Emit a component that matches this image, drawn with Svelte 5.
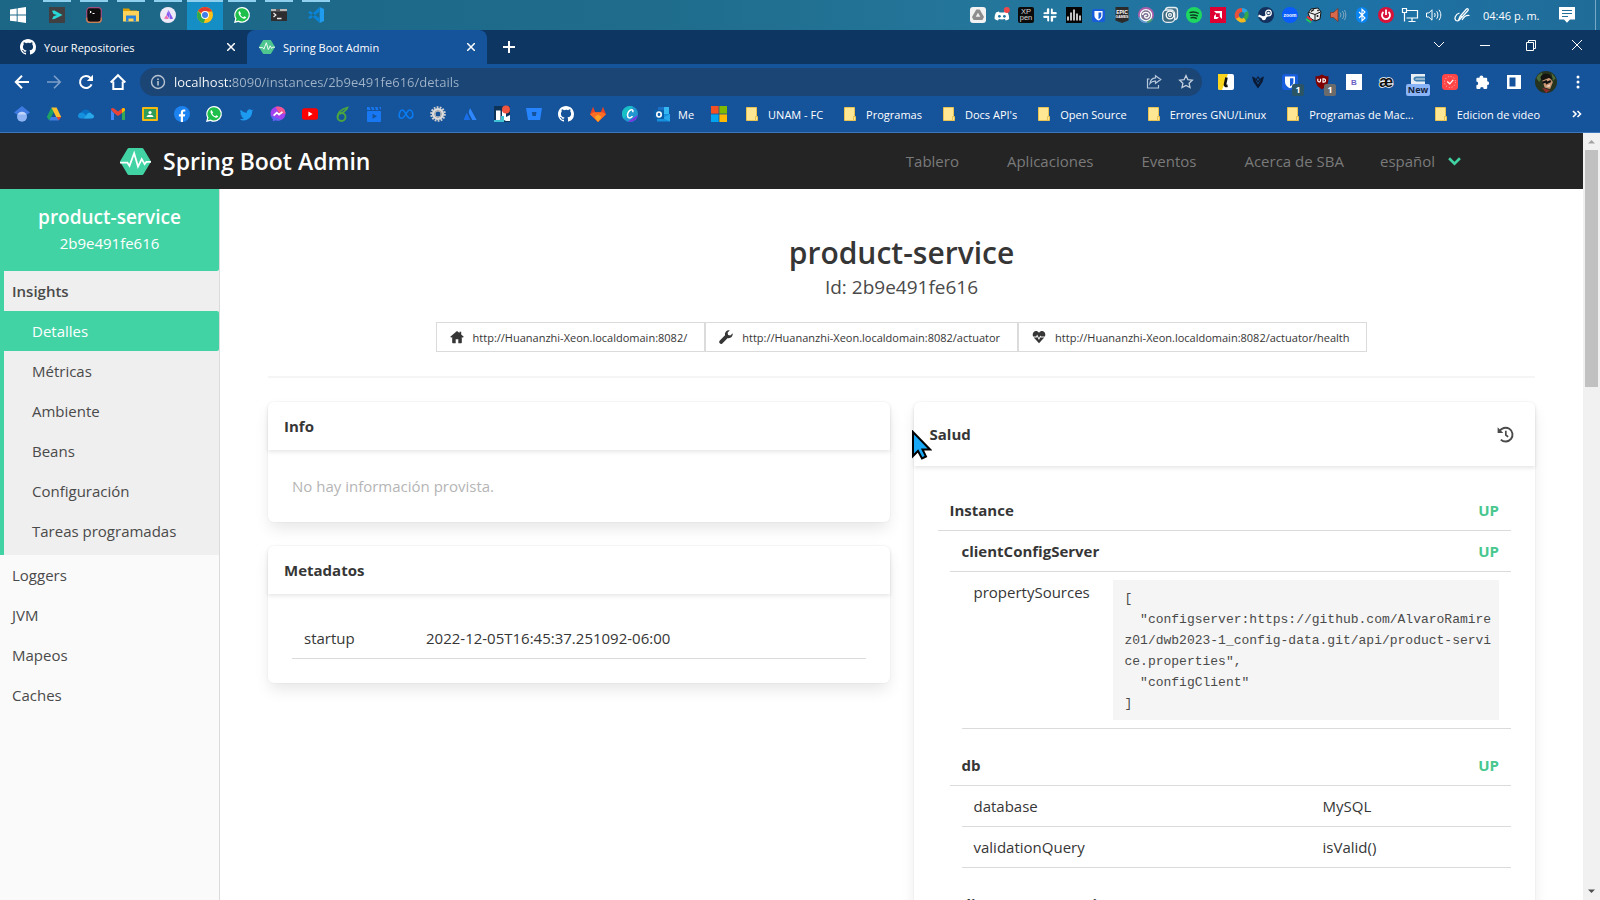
<script>
  const art = {
    windows: '<path fill="#fff" d="M0 2.4 6.7 1.4v6.2H0zM7.6 1.3 16 0v7.6H7.6zM0 8.4h6.7v6.2L0 13.7zM7.6 8.4H16V16l-8.4-1.2z"/>',
    arrowApp: '<rect width="16" height="16" fill="#404042"/><path fill="#28d9d5" d="M3 3.800 5.500 3.600 13.500 8 5.500 12 3 12.200 4.500 9.200 8 8 4.500 7z"/>',
    jet: '<rect x=".7" y=".7" width="14.6" height="14.6" rx="3" fill="#0d0d0d" stroke="#a04f80" stroke-width="1.200"/><path d="M.7 10.500v1.800c0 2 1 3 3 3h8.600c2 0 3-1 3-3v-1.800" fill="none" stroke="#c98352" stroke-width="1.200"/><path d="m3.800 4 1.500 1-1.500 1M6.500 6.500h2" stroke="#fff" fill="none"/>',
    explorer: '<path fill="#e0a100" d="M0 1.500h6l1.500 2H14V8H0z"/><path fill="#ffd35a" d="M0 4h16v10.5H0z"/><path fill="#2a83d8" d="M3 8.500h10v6h-2.500v-3h-5v3H3z"/>',
    prism: '<circle cx="8" cy="8" r="8" fill="#efeaf7"/><path fill="#8558f0" d="m8.5 3 4.5 8.5c-1 .5-2 .6-3 .4z"/><path fill="#8558f0" d="M8.500 3 6.500 7.500l3 4.500z"/><path fill="#f06bb0" d="M4 11.6 6.500 8l2 3.800c-1.500.3-3 .3-4.500-.2z"/>',
    chrome: '<circle cx="8" cy="8" r="8" fill="#fbc116"/><path fill="#e33b2e" d="M8 8 1.1 4A8 8 0 0 1 14.9 4L15 4.4H8z"/><path fill="#2da94f" d="M1.1 4 6 9.8l2.3 1.6L6.8 15.9A8 8 0 0 1 1.1 4z"/><circle cx="8" cy="8" r="3.9" fill="#fff"/><circle cx="8" cy="8" r="3" fill="#3f7ee8"/>',
    whatsapp: '<path fill="#fff" d="M8.1 0A7.9 7.9 0 0 0 1.2 11.7L0 16l4.4-1.1A7.9 7.9 0 1 0 8.1 0z"/><path fill="#1fbf4b" d="M8.1 1.3a6.6 6.6 0 0 0-5.6 10.2l-.7 2.7 2.8-.7A6.6 6.6 0 1 0 8.1 1.3z"/><path fill="#fff" d="M5.5 4c-.9.5-1.2 1.5-.9 2.5.8 2.6 2.4 4.3 5 5.2 1.300.3 2.400-.3 2.600-1.400l-1.900-1-.9 1c-1.500-.6-2.500-1.600-3.100-2.900l.8-.9z"/>',
    terminal: '<path fill="#2e2e30" d="M0 2h16v12H0z"/><path fill="#b8b8b8" d="M0 2h16v2.200H0z"/><path fill="#5a5a5c" d="M5 2h4v2.200H5z"/><path d="m2.500 6 2.300 2-2.300 2M6 11.500h4.500" stroke="#e8e8e8" stroke-width="1.300" fill="none"/>',
    vscode: '<path fill="#1f9cf0" d="m11.600 0 4.400 2v12l-4.400 2z"/><path fill="#0a84d8" d="M11.600 0v4.400L2.200 12 0 10.700zM11.600 16v-4.400L2.200 4 0 5.300z"/>',
    github: '<path fill="#fff" d="M8 0C3.580 0 0 3.580 0 8c0 3.540 2.290 6.530 5.470 7.590.4.070.55-.17.55-.38v-1.490c-2.010.37-2.530-.49-2.690-.94-.09-.23-.48-.94-.82-1.130-.28-.15-.68-.52-.01-.53.63-.01 1.080.58 1.230.82.72 1.210 1.870.87 2.330.66.07-.52.28-.87.51-1.070-1.780-.2-3.640-.89-3.640-3.950 0-.87.31-1.590.82-2.150-.08-.2-.36-1.020.08-2.120 0 0 .67-.21 2.200.82A7.650 7.650 0 0 1 8 3.860c.68 0 1.360.09 2 .27 1.530-1.040 2.200-.82 2.200-.82.44 1.100.16 1.920.08 2.120.51.56.82 1.270.82 2.150 0 3.070-1.870 3.750-3.650 3.950.29.25.54.73.54 1.480v2.200c0 .21.15.46.55.38A8.010 8.010 0 0 0 16 8c0-4.420-3.580-8-8-8z"/>',
    sba: '<path fill="currentColor" d="M4.600 1h6.800c.3 0 .6.200.7.400l3.700 6.200c.2.300.2.500 0 .8l-3.700 6.200c-.1.200-.4.400-.7.400H4.600c-.3 0-.6-.2-.7-.4L.2 8.400C0 8.100 0 7.900.2 7.600l3.700-6.200c.1-.2.400-.4.700-.4z"/><path d="M0 8.600h3.800l1.100 1.600L7.300 3.700l2 6.900 1.900-3.800 1.500 2.600.9-1.200H16" fill="none" stroke="#fff" stroke-width=".9"/>',
    back: '<path d="M15 8H2M8 1.800 1.800 8 8 14.200" fill="none" stroke="#fff" stroke-width="2"/>',
    fwd: '<path d="M1 8h13M8 1.800 14.200 8 8 14.200" fill="none" stroke="#7ea0c9" stroke-width="1.600"/>',
    reload: '<path d="M13.600 10.300A6 6 0 1 1 12.500 4" fill="none" stroke="#fff" stroke-width="2"/><path fill="#fff" d="M15 .800V7H8.800z"/>',
    home: '<path d="M3.300 7.500V15h9.400V7.500M.700 8.500 8 1.200l7.300 7.300" fill="none" stroke="#fff" stroke-width="2"/>',
    info: '<circle cx="8" cy="8" r="6.500" fill="none" stroke="#b8c4d2" stroke-width="1.400"/><path fill="#b8c4d2" d="M7.200 7h1.600v4.500H7.200zM7.200 4.400h1.600V6H7.200z"/>',
    share: '<path d="M3.500 5H1.500v9h11v-3" fill="none" stroke="#b8c8dc" stroke-width="1.200"/><path d="M9.500 1.700 14.800 5.500 9.500 9.300V7.100C7 6.900 5.200 7.800 4 9.500c.3-3.500 2.200-5.300 5.500-5.600z" fill="none" stroke="#b8c8dc" stroke-width="1.200"/>',
    star: '<path d="m8 1.600 1.900 4.100 4.400.5-3.200 3 .9 4.400L8 11.400l-4 2.200.9-4.400-3.200-3 4.400-.5z" fill="none" stroke="#c4d0de" stroke-width="1.300"/>',
    scholar: '<path fill="#3f7ae0" d="M8 0 0 6.500 3.500 9h9L16 6.500z"/><circle cx="8" cy="10.800" r="5" fill="#8fb4f4"/><path fill="#c3d6fa" d="M3.600 8.500a5 5 0 0 1 8.800 0z"/>',
    drive: '<path fill="#1ea362" d="M5.400 1.500 .8 11l2.400 3.500L8 5.800z"/><path fill="#fbc02d" d="M5.400 1.500h5.200L15.200 11h-5z"/><path fill="#3f7de8" d="M3.200 14.500h9.600L13 12.500 10.800 11H5z"/><path fill="#e04435" d="M10.500 11h4.700l-2.400 3.500z"/>',
    onedrive: '<path fill="#0a6fc2" d="M3.500 6.500C4.500 3.200 9.600 2.200 11.700 6L14 7 8 10z"/><path fill="#1590df" d="M0 10c0-3 3-4.300 5.300-3L12 12.500H3C1.200 12.500 0 11.500 0 10z"/><path fill="#28a8ea" d="M6 12.500 9.500 7.500c1.500-1.400 3.800-.9 4.500.8 1.300.3 2 1.200 2 2.200 0 1.200-1 2-2.200 2z"/>',
    gmail: '<path fill="#4285f4" d="M1 4v10h3V7z"/><path fill="#34a853" d="M12 7v7h3V4z"/><path fill="#ea4335" d="M1 3.500c0-1.700 1.700-2 3-1l4 3 4-3c1.300-1 3-.7 3 1L12 7 8 10 4 7z"/><path fill="#fbbc04" d="m12 2.500v4.500l3-2.500v-1c0-1.700-1.700-2-3-1z"/>',
    classroom: '<rect y="1" width="16" height="14" rx="1" fill="#f5b912"/><path fill="#2f9e58" d="M2 3h12v10H2z"/><circle cx="8" cy="6.500" r="1.600" fill="#fff"/><path fill="#fff" d="M4.500 11c.5-3 6.500-3 7 0z"/>',
    facebook: '<circle cx="8" cy="8" r="8" fill="#1b82f0"/><path fill="#fff" d="M6.800 16v-5.500H4.900V8.200h1.900V6.600c0-2.200 1.200-3.200 3-3.200.7 0 1.300.1 1.500.2v2h-1c-1 0-1.300.5-1.300 1.200v1.400h2.200l-.4 2.300H9V16z"/>',
    twitter: '<path fill="#1d9bf0" d="M14.300 5c.5-.4.900-.9 1.100-1.400-.5.300-1.100.5-1.700.6a2.900 2.900 0 0 0-4.900 2.500C6.300 6.600 4.200 5.500 2.700 3.800c-.8 1.300-.4 2.900.9 3.800L2.400 7.300c0 1.300.9 2.400 2.200 2.800-.4.100-.9.100-1.300 0 .4 1.100 1.400 1.900 2.700 2A6 6 0 0 1 1.500 13.200c5 3 12.500.4 12.800-8.200z"/>',
    messenger: '<path fill="#a042f0" d="M8 .5C3.700.5.500 3.500.5 7.600c0 2.200.9 4 2.400 5.300v2.600l2.200-1.200c.9.3 1.900.4 2.900.4 4.300 0 7.500-3.100 7.500-7.100S12.300.5 8 .5z"/><path fill="#f2568e" d="M8 .5c4.300 0 7.500 3 7.500 7.100l-6 .4-4-7.200z"/><path fill="#2f7bf5" d="M.8 9.500c.5 1.500 1.100 2.500 2.100 3.400v2.600l2.200-1.200c.9.300 1.900.4 2.900.4 1.300 0 2.600-.4 3.600-.9z" opacity=".6"/><path d="m3.600 9.700 3.200-3 2.300 1.900 3.300-2.700" fill="none" stroke="#fff" stroke-width="1.700"/>',
    youtube: '<rect y="2.300" width="16" height="11.400" rx="2.500" fill="#f00"/><path fill="#fff" d="M6.400 5.600v4.800L10.600 8z"/>',
    leaf: '<circle cx="7.500" cy="11" r="4" fill="none" stroke="#4aa540" stroke-width="1.900"/><path d="M3.700 11C3.500 6.500 6.500 3.500 13.500 1.500 12.800 4.500 9.500 6 6 8" fill="none" stroke="#4aa540" stroke-width="1.700"/>',
    studio: '<rect x="1" y="5" width="14" height="11" rx="1" fill="#1877f2"/><path fill="#1877f2" d="M1 1h2.600l1 3H1zM5 1h2.400l1 3H6zM9 1h2.400l1 3H10zM13 1h2v3z"/><path fill="#15539c" d="M6.500 7.800v5L11 10.300z"/>',
    meta: '<path d="M1.200 10.300C1 7 2.400 4 4.400 4 7 4 9 12.200 11.800 12.200c2 0 3-1.500 3-3.200C14.800 6.500 13.600 4 11.600 4 8.800 4 7 12.200 3.700 12.200c-1.500 0-2.400-.7-2.500-1.900z" fill="none" stroke="#0a7cf2" stroke-width="1.600"/>',
    gear: '<circle cx="8" cy="8" r="6.800" fill="none" stroke="#d0d0d0" stroke-width="2" stroke-dasharray="1.800 1.250"/><circle cx="8" cy="8" r="4.300" fill="none" stroke="#dcdcdc" stroke-width="3.600"/><circle cx="8" cy="8" r="3.400" fill="none" stroke="#9a9a9a" stroke-width=".9"/>',
    atlas: '<path fill="#1a6fe8" d="M4.300 7.500c.3-.4.7-.3.900 0l3 6.600H1.600z"/><path fill="#2f88ff" d="M8.200 2.200 14.600 14.100h-4.300L7 7.500c-.4-1.800 0-3.600 1.200-5.300z"/>',
    photo: '<rect width="16" height="16" fill="#0d3358"/><path fill="#fff" d="M2 4.500h4.500V14H2zM8 5h4v6l4-2v6h-4l-4-2z"/><path fill="#3fc1d4" d="M0 14h7v2H0zM7 10h3v6H7z"/><circle cx="12" cy="3.500" r="4" fill="#f0553f"/>',
    bitbucket: '<path fill="#2684ff" d="M0 2h16l-1.900 12H2z"/><path fill="#15539c" d="M5.800 6h4.700l-.7 4H6.500z"/>',
    gitlab: '<path fill="#e24329" d="m3 .8 2.300 5.500h5.400L13 .800l3 7.500L8 16 0 8.300z"/><path fill="#fc6d26" d="M0 8.300 3.500 6.300h9L16 8.300 8 16z"/><path fill="#fca326" d="M4.500 11 8 8.500l3.500 2.500L8 16z"/>',
    canva: '<circle cx="8" cy="8" r="8" fill="#2196cf"/><path fill="#18bfc6" d="M0 8a8 8 0 0 1 11-7.400L2 13.300A8 8 0 0 1 0 8z"/><path fill="#7a35e0" d="M15.900 9A8 8 0 0 1 6 15.700z"/><path d="M10.700 6.200c.5-1.200.2-2.500-1-2.500-2.200 0-4.200 3-4.200 5.600 0 3 3 3.600 5 .8" fill="none" stroke="#fff" stroke-width="1.500"/>',
    outlook: '<path fill="#35b8f1" d="M4 1h11v8H4z"/><path fill="#1a6fc4" d="M4 1h6v5H4z"/><path fill="#1490df" d="M3 8h13v7.500H3z"/><path fill="#28a8ea" d="M16 8v7.500l-7-3.500z"/><rect y="4" width="10" height="9" fill="#0b5ea8"/><ellipse cx="5" cy="8.500" rx="2.200" ry="2.500" fill="none" stroke="#fff" stroke-width="1.600"/>',
    ms: '<path fill="#f25022" d="M0 0h7.600v7.600H0z"/><path fill="#7fba00" d="M8.400 0H16v7.600H8.400z"/><path fill="#00a4ef" d="M0 8.400h7.600V16H0z"/><path fill="#ffb900" d="M8.400 8.400H16V16H8.400z"/>',
    folder: '<path fill="#ffe793" stroke="#e8c353" d="M2.500 1.500h10v13h-10z"/><path fill="#ffe793" stroke="#e8c353" d="M11.500 10.500h2v4h-2z"/>',
    extL: '<rect width="16" height="16" rx="2" fill="#fff"/><path fill="#fbd51b" d="M0 0h10L4 16H2a2 2 0 0 1-2-2z"/><path d="M8.500 3.500 7 10.500c-.2 1.200.6 1.600 2.600 1.200" fill="none" stroke="#111" stroke-width="2.600"/>',
    extV: '<path fill="#0b1a33" d="M2 2.500 5.500 4l.5 3 2 3.500L10 7l.5-3L14 2.500 12.500 8 8 14.500 3.500 8z"/><path d="M6.300 5.500 8 3l1.700 2.500L8 8z" fill="none" stroke="#0b1a33" stroke-width="1.100"/>',
    bit: '<rect width="16" height="16" rx="2.500" fill="#175ddc"/><path fill="#fff" d="M3 2.500h10V8c0 3-2.300 5-5 6.200C5.300 13 3 11 3 8z"/><path fill="#175ddc" d="M8 4.200h3.400V8c0 2-1.400 3.400-3.400 4.500z"/>',
    ublock: '<path fill="#800000" d="M8 .5c2 1.300 4 1.800 6.500 1.800 0 6-.5 10-6.500 13-6-3-6.500-7-6.500-13C4 2.300 6 1.800 8 .5z"/><path d="M3.800 4.800v2c0 1.500 2.700 1.500 2.700 0v-2M9 4.800v3.400h.8c2.300 0 2.300-3.400 0-3.400z" fill="none" stroke="#fff" stroke-width="1.200"/>',
    extB: '<rect width="16" height="16" fill="#fff"/><text x="8" y="11" text-anchor="middle" font-family="Liberation Sans" font-weight="700" font-size="8" fill="#6b5fc7">B</text>',
    ae: '<text x="8" y="12.500" text-anchor="middle" font-family="Liberation Sans" font-weight="700" font-size="16" fill="#111" stroke="#fff" stroke-width="1.500" paint-order="stroke">æ</text>',
    extS: '<path fill="#e8eef4" d="M1 0h14v16H1z"/><path d="M15 3.500H6c-2.500.5-2 2.500 0 3h9" fill="none" stroke="#3d7fb0" stroke-width="1.800"/>',
    clock: '<rect width="16" height="16" rx="3.500" fill="#ff4545"/><circle cx="8" cy="8" r="5.500" fill="none" stroke="#ffc1c1" stroke-dasharray="1 1.880"/><path d="m5.200 7.500 2.600 2.300 3.400-4" fill="none" stroke="#fff" stroke-width="1.200"/>',
    puzzle: '<path fill="#fff" d="M5.500 3.300a1.900 1.900 0 0 1 3.800 0v.5h3c.5 0 .9.400.9.900v2.600a1.900 1.900 0 0 1 0 3.800v2.900c0 .5-.4.900-.9.900H9.700a1.800 1.800 0 0 0-3.600 0H3.300c-.5 0-.9-.4-.9-.9v-2.800a1.800 1.800 0 0 0 0-3.600V4.700c0-.5.400-.9.900-.9h2.200z"/>',
    panel: '<path fill="#fff" d="M1 1h14v14H1z"/><path fill="#15539c" d="M3.500 3.500h6v9h-6z"/>',
    dots: '<circle cx="8" cy="3" r="1.500" fill="#fff"/><circle cx="8" cy="8" r="1.500" fill="#fff"/><circle cx="8" cy="13" r="1.500" fill="#fff"/>',
    avatar: '<circle cx="8" cy="8" r="8" fill="#26331f"/><path fill="#4b6b3a" d="M1 5a8 8 0 0 1 4-4l1 3-3 4zM12 1.200l3 4-2 2z"/><path fill="#c99573" d="m5 6 5-2 3 4-2 5-4-1z"/><path fill="#15130f" d="M4 5c0-3 5-4 7-2l2 3-3-1-5 2z"/><path d="m5.500 8.500 2.500-1 .5 1.200 3-1.500" stroke="#111" stroke-width="1.600" fill="none"/><path fill="#f5e6da" d="m8 11 3-1.200-.5 1.600z"/><path fill="#8b2b2b" d="M5 12l6 2-3 2z"/>',
    tDrive: '<rect width="16" height="16" rx="3" fill="#f2f2f2"/><path d="M6.300 2.500h3.400l4.300 7.500-1.600 3H3.600L2 10z" fill="#8d8d8d"/><path d="M8 5.800 10.300 9.800H5.700z" fill="#f2f2f2"/>',
    discord: '<path fill="#fff" d="M5 4.500c-1.300.2-2.300.5-3 1C1 7.500.500 9.500.600 12c1.200.9 2.200 1.400 3.400 1.500l.9-1.400c2 .5 4 .5 5.900 0l.9 1.400c1.200-.1 2.200-.6 3.400-1.500.1-2.500-.4-4.500-1.500-6.500-.7-.5-1.700-.8-3-1l-.5 1H5.500z"/><circle cx="5.400" cy="9.300" r="1.400" fill="#2173a0"/><circle cx="10.400" cy="9.300" r="1.400" fill="#2173a0"/><circle cx="12.800" cy="3" r="3" fill="#f04848"/>',
    xppen: '<rect width="16" height="16" rx="2" fill="#0b0b0b"/><g font-family="Liberation Sans" font-size="7.500" fill="#d8d8d8" text-anchor="middle"><text x="8" y="7">XP</text><text x="8" y="13">pen</text></g>',
    slack: '<g stroke="#fff" stroke-width="2.600" stroke-linecap="round"><path d="M6.200 2.500v3.500M2.500 9.800h3.500M9.800 10v3.500M10 6.200h3.500"/><path d="M9.800 2.500v3.300M2.500 6.200h3.300M6.200 10.200v3.300M10.200 9.800h3.300" stroke-width="2"/></g><path d="M8 1v14M1 8h14" stroke="#23749e"/>',
    bars: '<rect width="16" height="16" fill="#050505"/><path d="M2 9.500v4M5 5.500v8M8 2.500v11M11 6.500v7M14 8.500v5" stroke="#fff" stroke-width="1.500"/>',
    epic: '<path fill="#2b2b2b" d="M1.500 0h13v13.500L8 16l-6.500-2.500z"/><g font-family="Liberation Sans" font-weight="700" fill="#fff" text-anchor="middle"><text x="8" y="7" font-size="5">EPIC</text><text x="8" y="11" font-size="3.500">GAMES</text></g>',
    ubi: '<circle cx="8" cy="8" r="8" fill="#a95fa8"/><path fill="#5f9ed0" d="M.2 10A8 8 0 0 0 10 15.700l2-7z"/><path fill="#4aa070" d="M15 12a8 8 0 0 1-6 4l1-6z"/><circle cx="8" cy="8.200" r="5.600" fill="#7a6f90" stroke="#fff" stroke-width="1.300"/><path d="M4.500 8c.5-3.500 6-3.500 6.800 0 .3 2.700-3.500 4.300-4.600 1.800-.3-1.300 1.300-2 1.900-1" fill="none" stroke="#fff" stroke-width="1.400"/>',
    spiral: '<rect x="3.500" y=".500" width="12" height="12" rx="3" fill="#4a7488" stroke="#e3edf2" stroke-width="1.300"/><rect x=".7" y="3" width="12" height="12.300" rx="4" fill="#3f6b80" stroke="#e3edf2" stroke-width="1.300"/><circle cx="8" cy="8" r="3.800" fill="none" stroke="#fff" stroke-width="1.300"/><circle cx="8" cy="8" r="1.400" fill="none" stroke="#fff" stroke-width="1.100"/>',
    spotify: '<circle cx="8" cy="8" r="8" fill="#1ed760"/><path d="M3.500 5.700c3-1 6.500-.7 9.200.8M4 8.400c2.700-.8 5.300-.5 7.800.8M4.500 10.900c2.200-.6 4.400-.4 6.300.7" fill="none" stroke="#0c3b1e" stroke-width="1.400"/>',
    amd: '<rect width="16" height="16" fill="#dd0031"/><path fill="#fff" d="M4 4h8v8L9.800 9.800V6.200H6.200zM5.900 7v3.100H9l-1.900 1.900H4V8.900z"/>',
    ring: '<path d="M8 3A5 5 0 0 1 12.500 6.500" fill="none" stroke="#2ba4e8" stroke-width="4"/><path d="M12 5c1.500 3 .5 6-2.500 7.500" fill="none" stroke="#35a84c" stroke-width="4"/><path d="M11 12.500c-3 2-7 .5-8-3" fill="none" stroke="#f5b920" stroke-width="4"/><path d="M3.500 11C1.500 7 3.500 3.500 8 2.700" fill="none" stroke="#e9503b" stroke-width="4"/>',
    steam: '<circle cx="8" cy="8" r="8" fill="#14305c"/><circle cx="10.500" cy="6" r="2.800" fill="none" stroke="#fff" stroke-width="1.300"/><circle cx="10.500" cy="6" r="1.300" fill="#fff"/><path d="M.5 8.500 6 11l3-2.500" fill="none" stroke="#fff" stroke-width="2.300"/><circle cx="5.800" cy="11.300" r="2" fill="#fff"/>',
    zoomApp: '<circle cx="8" cy="8" r="8" fill="#0b5cff"/><text x="8" y="9.800" text-anchor="middle" font-family="Liberation Sans" font-weight="700" font-size="5" fill="#fff">zoom</text>',
    dice: '<path fill="#eee" stroke="#111" d="m5 2 7-1 3 4-1 7-5 2-5-3-2-5z"/><path d="M3 5.500 9 7.500l5.500-2.500M9 7.500v6" stroke="#111" fill="none"/><path d="M5 4.500l3-2M11.500 3l1 1" stroke="#111" stroke-width="1.500"/><path d="M1 9.500l5 4" stroke="#e33" stroke-width="1.800"/><path d="M0 12l5 3.500" stroke="#2c5" stroke-width="1.600"/><circle cx="11.500" cy="9" r="1" fill="#111"/>',
    sound: '<path fill="#d8694a" stroke="#7a2f1c" stroke-width=".7" d="M.5 5.500h3L8 1.500v13L3.500 10.500h-3z"/><path d="M10 5.500c1.200 1.500 1.200 3.500 0 5M12.300 4c2 2.500 2 5.500 0 8M14.500 3c1.800 3 1.800 7 0 10" fill="none" stroke="#9bb8c8" stroke-width=".8"/>',
    bt: '<rect x="2" width="12" height="16" rx="6" fill="#0a84f0"/><path d="m5 5 6 6-3 2.700V2.300L11 5l-6 6" fill="none" stroke="#fff" stroke-width="1.100"/>',
    power: '<circle cx="8" cy="8" r="8" fill="#d9123a"/><path d="M5.500 5a4 4 0 1 0 5 0M8 2.500V8" fill="none" stroke="#fff" stroke-width="1.800"/>',
    net: '<path d="M4.500 3.500h11v7.500h-11M.5 1.500h4v4h-4zM2.500 5.500v9M10 11v3M6.500 14.500h7" fill="none" stroke="#fff" stroke-width="1.200"/>',
    vol: '<path fill="none" stroke="#fff" d="M.5 6h2.300L6 2.800v10.400L2.800 10H.5z"/><path d="M8.500 6c.8 1.200.8 2.800 0 4M10.700 4.300c1.600 2.200 1.600 5.200 0 7.400M13 2.800c2.400 3.200 2.400 7.200 0 10.400" fill="none" stroke="#fff"/>',
    pen: '<path d="M6 9.500 12.500 2c1-1 2.500.5 1.500 1.500L7.500 10.700 5 12zM5.500 6C1 7.500 0 12 2 13.500c2.500 1.500 5-2 6-4.500M8 13c1.500-2.500 4-5.500 7.500-4.500" fill="none" stroke="#fff" stroke-width="1.200"/>',
    note: '<path fill="#fff" d="M0 0h16v12.500h-5L8 15.700 5 12.500H0z"/><path d="M3 3.500h10M3 6.500h10M3 9.500h6" stroke="#22719b" stroke-width="1.100"/>',
    hHome: '<path fill="#363636" d="M8 1 .3 7.800l1 1.100L2.500 8v6.200c0 .5.300.8.800.8h3.200v-4.500h3V15h3.200c.5 0 .8-.3.800-.8V8l1.200.9 1-1.100L12.800 5V2h-2v1.400z"/>',
    wrench: '<path fill="#363636" d="M15.600 3.700 13 6.200l-2.600-.6L9.800 3l2.500-2.600A4.500 4.500 0 0 0 6.900 6L.7 12.200a2.200 2.200 0 0 0 3.100 3.100L10 9.100a4.500 4.500 0 0 0 5.600-5.400z"/>',
    heart: '<path fill="#363636" d="M8 3.200C6.500.800 3.500.800 2 2.200.600 3.600.500 5.600 1.200 7.400h3.600l1-2.200 2.200 4 1.500-2.900.8 1.100h4.500c.7-1.800.6-3.800-.8-5.200-1.500-1.400-4.500-1.400-6 1zM2 8.600 8 15l6-6.400H9.800l-.3-.4L8 11.300 5.900 7.500l-.4 1.100z"/>',
    history: '<path d="M2.300 5.200A6.500 6.500 0 1 1 3.600 12.800" fill="none" stroke="#4a4a4a" stroke-width="1.800"/><path fill="#4a4a4a" d="M.6 1.200v5.300h5.300z"/><path d="M8.300 4.500v4l2.200 1.800" fill="none" stroke="#4a4a4a" stroke-width="1.600"/>'
  };

  const apps = [
    ['arrowApp', 'Terminal remota'], ['jet', 'Toolbox'], ['explorer', 'Explorador'], ['prism', 'Prisma'],
    ['chrome', 'Chrome'], ['whatsapp', 'WhatsApp'], ['terminal', 'Terminal'], ['vscode', 'Visual Studio Code']
  ];
  const tray = ['tDrive', 'discord', 'xppen', 'slack', 'bars', 'bit', 'epic', 'ubi', 'spiral', 'spotify', 'amd', 'ring', 'steam', 'zoomApp', 'dice', 'sound', 'bt', 'power', 'net', 'vol'];
  const marks = ['scholar', 'drive', 'onedrive', 'gmail', 'classroom', 'facebook', 'whatsapp', 'twitter', 'messenger', 'youtube', 'leaf', 'studio', 'meta', 'gear', 'atlas', 'photo', 'bitbucket', 'github', 'gitlab', 'canva'];
  const folders = ['UNAM - FC', 'Programas', "Docs API's", 'Open Source', 'Errores GNU/Linux', 'Programas de Mac...', 'Edicion de video'];
  const extensions = [
    { icon: 'extL' }, { icon: 'extV' }, { icon: 'bit', badge: '1', tone: 'teal' }, { icon: 'ublock', badge: '1', tone: 'gray' },
    { icon: 'extB' }, { icon: 'ae' }, { icon: 'extS', badge: 'New', tone: 'new' }, { icon: 'clock' }, { icon: 'puzzle' }, { icon: 'panel' }
  ];
  const insights = ['Detalles', 'Métricas', 'Ambiente', 'Beans', 'Configuración', 'Tareas programadas'];
  const sections = ['Loggers', 'JVM', 'Mapeos', 'Caches'];
  const base = 'http://Huananzhi-Xeon.localdomain:8082/';
  const endpoints = [['hHome', base], ['wrench', base + 'actuator'], ['heart', base + 'actuator/health']];
  const sources = `[
  "configserver:https://github.com/AlvaroRamirez01/dwb2023-1_config-data.git/api/product-service.properties",
  "configClient"
]`;
  let url = $state('localhost:8090/instances/2b9e491fe616/details');
</script>

{#snippet icon(name, cls = '')}
  <svg class="icon {cls}" viewBox="0 0 16 16" aria-hidden="true">{@html art[name]}</svg>
{/snippet}

<div class="screen">
  <div class="taskbar">
    <button class="start" aria-label="Inicio">{@render icon('windows')}</button>
    {#each apps as [name, label]}
      <button class="app" class:current={name === 'chrome'} aria-label={label}>{@render icon(name)}</button>
    {/each}
    <div class="tray">
      {#each tray as name}
        <button class="cell" aria-label={name}>{@render icon(name, name === 'bit' ? 'small' : '')}</button>
      {/each}
      <button class="cell pen" aria-label="Lápiz">{@render icon('pen')}</button>
      <time>04:46 p. m.</time>
      <button class="cell note" aria-label="Notificaciones">{@render icon('note')}</button>
    </div>
  </div>

  <div class="tabs">
    <div class="tab">
      {@render icon('github')}<span>Your Repositories</span>
      <button class="close" aria-label="Cerrar Your Repositories"><svg viewBox="0 0 8 8"><path d="m0 0 8 8M8 0 0 8" /></svg></button>
    </div>
    <div class="tab active">
      {@render icon('sba', 'mint')}<span>Spring Boot Admin</span>
      <button class="close" aria-label="Cerrar Spring Boot Admin"><svg viewBox="0 0 8 8"><path d="m0 0 8 8M8 0 0 8" /></svg></button>
    </div>
    <button class="plus" aria-label="Nueva pestaña"><svg viewBox="0 0 12 12"><path d="M6 0v12M0 6h12" /></svg></button>
    <div class="controls">
      <button aria-label="Buscar pestañas"><svg viewBox="0 0 12 12"><path d="m1 3 5 5 5-5" /></svg></button>
      <button aria-label="Minimizar"><svg viewBox="0 0 12 12"><path d="M1 6.500h10" /></svg></button>
      <button aria-label="Restaurar"><svg viewBox="0 0 12 12"><path d="M1.500 3.500h7v8h-7zM3.500 3.500v-2h7v8h-2" /></svg></button>
      <button aria-label="Cerrar"><svg viewBox="0 0 12 12"><path d="m1 1 10 10M11 1 1 11" /></svg></button>
    </div>
  </div>

  <div class="toolbar">
    <button class="tool" aria-label="Atrás">{@render icon('back')}</button>
    <button class="tool" aria-label="Adelante">{@render icon('fwd')}</button>
    <button class="tool" aria-label="Recargar">{@render icon('reload')}</button>
    <button class="tool" aria-label="Página principal">{@render icon('home')}</button>
    <div class="omnibox">
      {@render icon('info')}
      <input aria-label="Dirección" bind:value={url} />
      <button class="tool" aria-label="Compartir">{@render icon('share')}</button>
      <button class="tool" aria-label="Favorito">{@render icon('star')}</button>
    </div>
    {#each extensions as ext}
      <button class="tool" aria-label={ext.icon}>
        {@render icon(ext.icon)}
        {#if ext.badge}<span class="badge {ext.tone}">{ext.badge}</span>{/if}
      </button>
    {/each}
    <button class="tool" aria-label="Perfil">{@render icon('avatar', 'large')}</button>
    <button class="tool" aria-label="Menú">{@render icon('dots')}</button>
  </div>

  <nav class="bookmarks" aria-label="Marcadores">
    {#each marks as name}
      <a class="tool" href="#{name}" aria-label={name}>{@render icon(name)}</a>
    {/each}
    <a class="mark" href="#me">{@render icon('outlook')}Me</a>
    <a class="mark" href="#ms" aria-label="Microsoft">{@render icon('ms')}</a>
    {#each folders as name}
      <a class="mark folder" href="#{name}">{@render icon('folder')}{name}</a>
    {/each}
    <button class="more" aria-label="Más marcadores"><svg viewBox="0 0 10 8"><path d="m1 1 3 3-3 3M5.500 1l3 3-3 3" /></svg></button>
  </nav>

  <div class="viewport">
    <div class="page">
      <header class="navbar">
        <a class="brand" href="#home">{@render icon('sba', 'logo')}Spring Boot Admin</a>
        <nav class="links">
          <a href="#tablero">Tablero</a>
          <a href="#aplicaciones">Aplicaciones</a>
          <a href="#eventos">Eventos</a>
          <a href="#acerca">Acerca de SBA</a>
          <label class="language">
            <select aria-label="Idioma"><option>español</option></select>
            <svg viewBox="0 0 12 8" aria-hidden="true"><path d="m1 1 5 5 5-5" /></svg>
          </label>
        </nav>
      </header>

      <div class="body">
        <aside class="sidebar">
          <a class="instance" href="#instance"><strong>product-service</strong><span>2b9e491fe616</span></a>
          <div class="group">
            <a class="lead" href="#insights">Insights</a>
            {#each insights as name, i}
              <a class="sub" class:selected={i === 0} href="#{name}">{name}</a>
            {/each}
          </div>
          {#each sections as name}
            <a href="#{name}">{name}</a>
          {/each}
        </aside>

        <main>
          <div class="hero">
            <h1>product-service</h1>
            <p>Id: 2b9e491fe616</p>
            <div class="endpoints">
              {#each endpoints as [name, href]}
                <a {href}>{@render icon(name)}{href}</a>
              {/each}
            </div>
          </div>
          <hr />
          <div class="columns">
            <div class="column">
              <section class="card">
                <header><h2>Info</h2></header>
                <div class="content"><p class="muted">No hay información provista.</p></div>
              </section>
              <section class="card">
                <header><h2>Metadatos</h2></header>
                <div class="content">
                  <table class="meta">
                    <tbody><tr><th scope="row">startup</th><td>2022-12-05T16:45:37.251092-06:00</td></tr></tbody>
                  </table>
                </div>
              </section>
            </div>
            <div class="column">
              <section class="card health">
                <header>
                  <h2>Salud</h2>
                  <button class="tool" aria-label="Historial">{@render icon('history', 'clockface')}</button>
                  <svg class="pointer" viewBox="0 0 20 30" aria-hidden="true"><path d="M1 2v24l5-5 4 7.500 4-2-3.500-7H18z" /></svg>
                </header>
                <div class="content">
                  <div class="state"><h3>Instance</h3><b>UP</b></div>
                  <div class="nest">
                    <div class="state"><h3>clientConfigServer</h3><b>UP</b></div>
                    <div class="nest">
                      <table class="sources">
                        <tbody><tr><th scope="row">propertySources</th><td><pre>{sources}</pre></td></tr></tbody>
                      </table>
                    </div>
                    <div class="state next"><h3>db</h3><b>UP</b></div>
                    <div class="nest">
                      <table class="facts">
                        <tbody>
                          <tr><th scope="row">database</th><td>MySQL</td></tr>
                          <tr><th scope="row">validationQuery</th><td>isValid()</td></tr>
                        </tbody>
                      </table>
                    </div>
                    <div class="state next"><h3>discoveryComposite</h3><b>UP</b></div>
                  </div>
                </div>
              </section>
            </div>
          </div>
        </main>
      </div>
    </div>
    <div class="scrollbar" aria-hidden="true">
      <svg viewBox="0 0 17 17"><path fill="#a3a3a3" d="M5 10.500h7L8.500 7z" /></svg>
      <div class="thumb"></div>
      <svg viewBox="0 0 17 17"><path fill="#505050" d="M5 6.500h7L8.500 10z" /></svg>
    </div>
  </div>
</div>

<style>
  :global(body) { margin: 0; background: #fff; }
  .screen {
    display: flex; flex-direction: column; height: 100vh; overflow: hidden;
    font-family: "Open Sans", "Noto Sans", sans-serif; font-size: 15px; color: #4a4a4a;
  }
  .screen *, .screen { box-sizing: border-box; }
  button { border: 0; padding: 0; background: none; font: inherit; color: inherit; display: flex; align-items: center; justify-content: center; }
  a { color: inherit; text-decoration: none; }
  h1, h2, h3, p, pre { margin: 0; }
  .icon { width: 16px; height: 16px; flex: none; display: block; overflow: visible; }
  .small { width: 13px; height: 13px; }

  .taskbar { flex: none; display: flex; height: 30px; background: linear-gradient(90deg, #1c6686, #1f6c8c 40%, #24769b 62%, #1d72a6 85%, #206c98); }
  .start { width: 36px; margin-right: 3px; }
  .app { width: 36px; margin-right: 1px; position: relative; }
  .app::before { content: ""; position: absolute; top: 0; left: 4px; right: 4px; height: 2px; background: #8fd0ee; }
  .app.current { background: #158ec6; }
  .app.current::before { left: 0; right: 0; }
  .tray { margin-left: auto; display: flex; align-items: center; border-right: 1px solid #79a9c4; margin-right: 4px; color: #fff; font-size: 11px; }
  .cell { width: 24px; height: 30px; }
  .pen { margin-left: 4px; margin-right: 9px; }
  .note { margin-left: 14px; margin-right: 16px; }
  time { white-space: nowrap; width: 58px; }

  .tabs { flex: none; display: flex; height: 34px; background: #0d3662; color: #fff; font-size: 11px; }
  .tab { display: flex; align-items: center; gap: 8px; width: 240px; padding: 0 12px; }
  .tab:first-child { width: 247px; padding-left: 20px; }
  .tab span { flex: 1; white-space: nowrap; }
  .tab.active { background: #15539b; border-radius: 8px 8px 0 0; }
  .mint { color: #4fc68f; }
  .close { width: 8px; }
  .close svg { width: 8px; height: 8px; }
  .close path { stroke: #fff; stroke-width: 1.5; }
  .plus { width: 44px; }
  .plus svg { width: 12px; height: 12px; }
  .plus path { stroke: #fff; stroke-width: 2; }
  .controls { margin-left: auto; display: flex; }
  .controls button { width: 46px; height: 30px; }
  .controls svg { width: 12px; height: 12px; }
  .controls path { fill: none; stroke: #fff; stroke-width: 1; }

  .toolbar { flex: none; display: flex; align-items: center; height: 36px; padding: 0 6px; background: #15539b; }
  .tool { width: 32px; height: 28px; flex: none; position: relative; display: flex; align-items: center; justify-content: center; }
  .omnibox { flex: 1; display: flex; align-items: center; height: 28px; margin: 0 8px 0 6px; padding-left: 10px; border-radius: 14px; background: #1b4574; }
  .omnibox input {
    flex: 1; min-width: 0; border: 0; outline: 0; padding: 0; margin-left: 8px; height: 28px;
    font: 13px "Open Sans", sans-serif; color: transparent;
    background: linear-gradient(90deg, #fff 57px, #9fb3ca 57px); background-clip: text; -webkit-background-clip: text;
  }
  .large { width: 22px; height: 22px; }
  .badge { position: absolute; right: 2px; bottom: 0; min-width: 12px; height: 12px; padding: 0 3px; border-radius: 2px; font: 700 9px/12px "Open Sans", sans-serif; color: #fff; text-align: center; }
  .teal { background: #2a5566; }
  .gray { background: #6b6b6b; }
  .new { right: 4px; left: 4px; padding: 0; background: #8ab4f8; color: #14233b; }

  .bookmarks { flex: none; display: flex; align-items: center; height: 33px; padding: 0 18px 4px 6px; background: #15539b; border-bottom: 1px solid #3d77bb; color: #fff; font-size: 11px; }
  .mark { display: flex; align-items: center; gap: 8px; margin-right: 17px; white-space: nowrap; flex: none; }
  .mark.folder { margin-right: 19px; }
  .mark.folder:nth-last-child(2) { margin-right: 0; }
  .bookmarks .tool + .mark { margin-left: 8px; }
  .more { margin-left: auto; }
  .more svg { width: 10px; height: 8px; }
  .more path { fill: none; stroke: #fff; stroke-width: 1.6; }

  .viewport { flex: 1; min-height: 0; display: flex; }
  .page { flex: 1; min-width: 0; display: flex; flex-direction: column; overflow: hidden; }
  .navbar { flex: none; display: flex; align-items: center; height: 56px; padding: 0 122px 0 120px; background: #242424; color: #7a7a7a; }
  .brand { display: flex; align-items: center; gap: 12px; font-size: 23px; font-weight: 600; color: #fff; white-space: nowrap; }
  .logo { width: 31px; height: 31px; color: #42d3a5; }
  .links { margin-left: auto; display: flex; align-items: center; gap: 48px; white-space: nowrap; }
  .language { display: flex; align-items: center; gap: 12px; margin-left: -12px; }
  select { appearance: none; border: 0; padding: 0; background: none; font: inherit; color: inherit; }
  .language svg { width: 13px; height: 9px; }
  .language path { fill: none; stroke: #42d3a5; stroke-width: 2.4; }

  .body { flex: 1; min-height: 0; display: flex; }
  .sidebar { flex: none; width: 220px; background: #fafafa; border-right: 1px solid #dbdbdb; }
  .sidebar a { display: block; padding: 0 12px; line-height: 40px; }
  .sidebar .instance { display: flex; flex-direction: column; align-items: center; height: 82px; padding: 15px 0 0; background: #42d3a5; border-radius: 0 0 2px 0; color: #fff; line-height: 26px; }
  .instance strong { font-size: 19px; font-weight: 600; }
  .group { border-left: 4px solid #42d3a5; background: #efefef; padding-bottom: 4px; }
  .sidebar .lead { padding: 0 8px; font-weight: 600; }
  .sidebar .sub { padding: 0 28px; }
  .sidebar .selected { background: #42d3a5; color: #fff; border-radius: 0 2px 2px 0; }

  main { flex: 1; min-width: 0; padding: 44px 48px 0; overflow: hidden; }
  .hero { text-align: center; }
  h1 { font-size: 30px; line-height: 40px; font-weight: 600; color: #363636; }
  .hero p { font-size: 19px; line-height: 28px; }
  .endpoints { display: flex; justify-content: center; margin-top: 21px; }
  .endpoints a { display: flex; align-items: center; gap: 9px; height: 30px; padding: 0 17px 0 13px; border: 1px solid #dbdbdb; font-size: 11px; color: #363636; white-space: nowrap; }
  .endpoints .icon { width: 14px; height: 14px; }
  hr { height: 2px; margin: 24px 0; border: 0; background: #f5f5f5; }
  .columns { display: flex; gap: 24px; align-items: flex-start; }
  .column { flex: 1; min-width: 0; display: flex; flex-direction: column; gap: 24px; }
  .card { border-radius: 6px; background: #fff; box-shadow: 0 8px 16px -2px rgba(10, 10, 10, 0.1), 0 0 0 1px rgba(10, 10, 10, 0.02); }
  .card header { position: relative; display: flex; align-items: center; height: 48px; padding: 0 16px; box-shadow: 0 2px 4px rgba(10, 10, 10, 0.1); border-radius: 6px 6px 0 0; }
  .card.health header { height: 64px; padding-right: 14px; }
  h2, h3 { flex: 1; font-size: 15px; font-weight: 700; color: #363636; }
  .content { padding: 24px; }
  .muted { line-height: 24px; color: #b5b5b5; }
  table { width: 100%; border-collapse: collapse; color: #363636; table-layout: fixed; }
  th, td { text-align: left; vertical-align: top; font-weight: 400; padding: 8px 12px; line-height: 24px; border-bottom: 1px solid #dbdbdb; }
  .meta th { width: 122px; }
  .clockface { width: 17px; height: 17px; }
  .pointer { position: absolute; left: -2px; top: 28px; width: 20px; height: 30px; }
  .pointer path { fill: #1aa9f7; stroke: #000; stroke-width: 2; }
  .state { display: flex; align-items: center; height: 41px; padding: 0 12px; border-bottom: 1px solid #dbdbdb; }
  .state.next { margin-top: 16px; }
  .state b { color: #48c78e; }
  .nest { margin-left: 12px; }
  .sources th { width: 139px; }
  .facts th { width: 349px; }
  pre { padding: 8px 6px 6px 12px; background: #f5f5f5; font: 13px/21px "Liberation Mono", monospace; color: #4a4a4a; white-space: pre-wrap; word-break: break-all; }

  .scrollbar { flex: none; width: 17px; display: flex; flex-direction: column; background: #f1f1f1; }
  .scrollbar svg { width: 17px; height: 17px; flex: none; }
  .thumb { width: 13px; height: 237px; margin: 0 2px auto; background: #c1c1c1; }
</style>
